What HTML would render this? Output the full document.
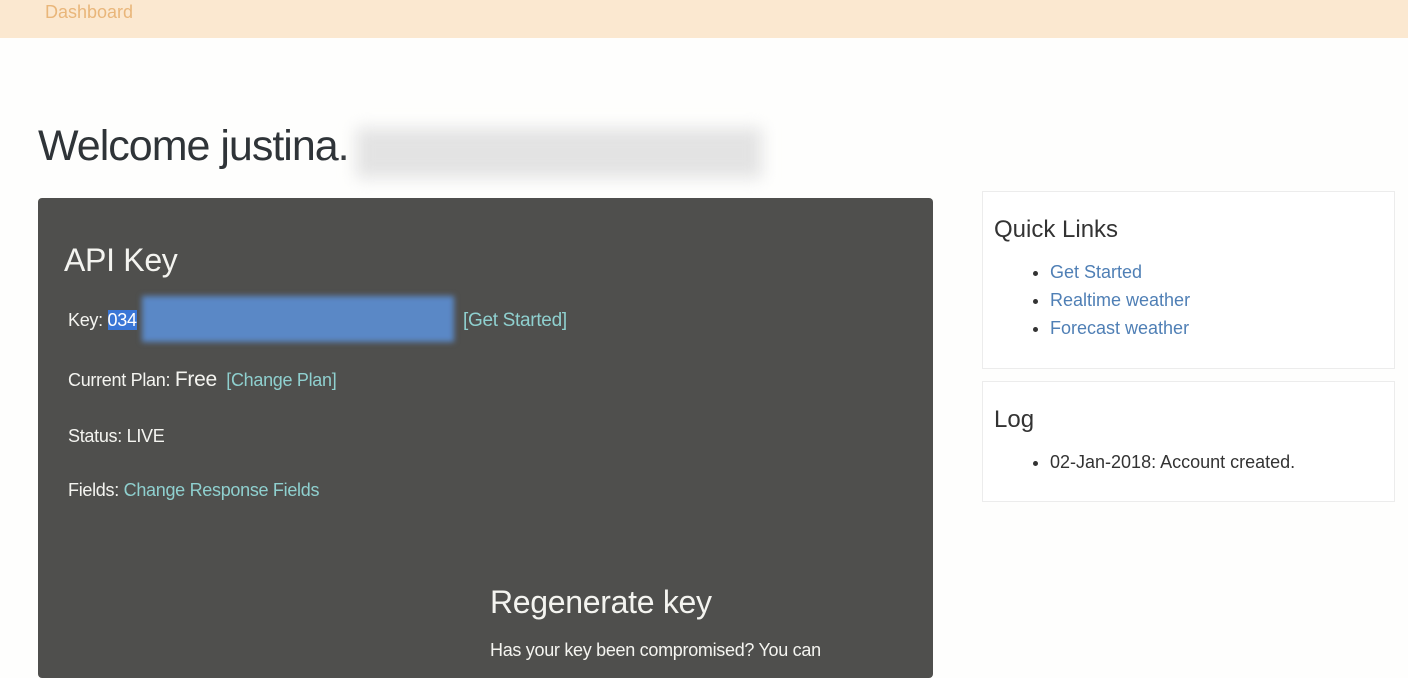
<!DOCTYPE html>
<html><head><style>
body{margin:0;width:1408px;height:666px;overflow:hidden;background:#fefefd;font-family:"Liberation Sans",sans-serif;position:relative}
.top{position:absolute;left:0;top:0;width:1408px;height:38px;background:#fbe8d0}
.top span{position:absolute;left:45px;top:2px;font-size:18px;color:#e9b67a}
h1{position:absolute;left:38px;top:122px;margin:0;font-weight:normal;font-size:43px;color:#2f3438;letter-spacing:-1px}
.blur{position:absolute;left:356px;top:128px;width:406px;height:50px;background:#e3e3e3;filter:blur(8px)}
.panel{position:absolute;left:38px;top:198px;width:895px;height:480px;background:#4f4f4d;border-radius:4px;color:#fff}
.panel .t{position:absolute;font-size:18px;color:#f4f4f0;letter-spacing:-0.3px}
.l{color:#8fd0cf}
.box{position:absolute;left:982px;width:411px;border:1px solid #ececec;background:#fff}
.box h3{margin:0;position:absolute;left:11px;font-weight:normal;font-size:24px;color:#333}
.box ul{position:absolute;margin:0;left:48px;padding-left:19px;font-size:18px;line-height:28px;color:#333}
.box ul a{color:#4f7fb5}
</style></head><body>
<div class="top"><span>Dashboard</span></div>
<h1>Welcome justina.</h1><div class="blur"></div>
<div class="panel">
<div class="t" style="left:26px;top:44px;font-size:32px">API Key</div>
<div class="t" style="left:30px;top:112px">Key: <span style="background:#3a76d6;color:#fff">034</span></div>
<div style="position:absolute;left:104px;top:98px;width:312px;height:46px;background:#5a88c6;filter:blur(3px)"></div>
<div class="t l" style="left:425px;top:112px;color:#8fd0cf;font-size:19px">[Get Started]</div>
<div class="t" style="left:30px;top:170px">Current Plan: <span style="font-size:21px">Free</span> &nbsp;<span class="l">[Change Plan]</span></div>
<div class="t" style="left:30px;top:228px">Status: LIVE</div>
<div class="t" style="left:30px;top:282px">Fields: <span class="l">Change Response Fields</span></div>
<div class="t" style="left:452px;top:386px;font-size:32px">Regenerate key</div>
<div class="t" style="left:452px;top:442px">Has your key been compromised? You can</div>
</div>
<div class="box" style="top:191px;height:176px"><h3 style="top:24px">Quick Links</h3>
<ul style="top:66px"><li><a>Get Started</a></li><li><a>Realtime weather</a></li><li><a>Forecast weather</a></li></ul></div>
<div class="box" style="top:381px;height:119px"><h3 style="top:24px">Log</h3>
<ul style="top:66px"><li>02-Jan-2018: Account created.</li></ul></div>
</body></html>
